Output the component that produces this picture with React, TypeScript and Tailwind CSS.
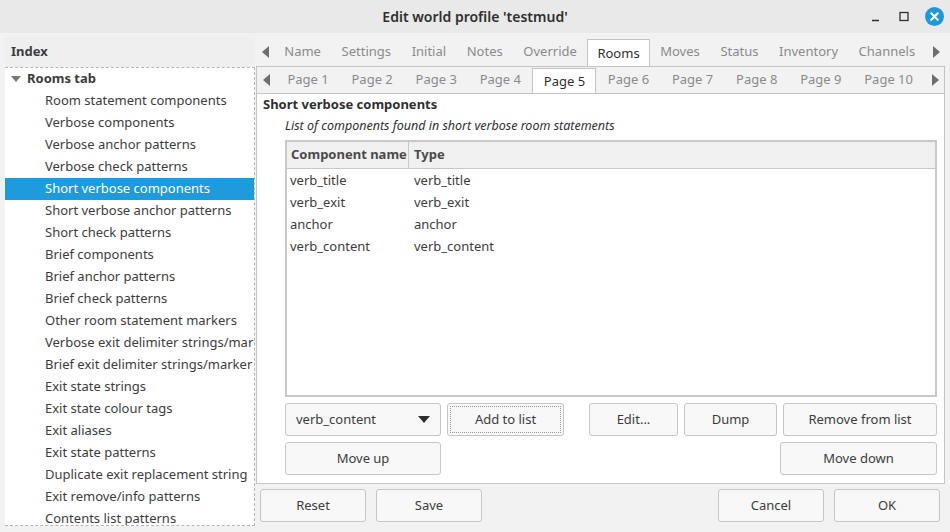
import React from 'react';

const treeItems = [
  'Room statement components',
  'Verbose components',
  'Verbose anchor patterns',
  'Verbose check patterns',
  'Short verbose components',
  'Short verbose anchor patterns',
  'Short check patterns',
  'Brief components',
  'Brief anchor patterns',
  'Brief check patterns',
  'Other room statement markers',
  'Verbose exit delimiter strings/markers',
  'Brief exit delimiter strings/marker patterns',
  'Exit state strings',
  'Exit state colour tags',
  'Exit aliases',
  'Exit state patterns',
  'Duplicate exit replacement string',
  'Exit remove/info patterns',
  'Contents list patterns',
];

const outerTabs = ['Name', 'Settings', 'Initial', 'Notes', 'Override', 'Rooms', 'Moves', 'Status', 'Inventory', 'Channels'];
const pageTabs = ['Page 1', 'Page 2', 'Page 3', 'Page 4', 'Page 5', 'Page 6', 'Page 7', 'Page 8', 'Page 9', 'Page 10'];

const rows = [
  ['verb_title', 'verb_title'],
  ['verb_exit', 'verb_exit'],
  ['anchor', 'anchor'],
  ['verb_content', 'verb_content'],
];

const ArrowLeft = () => (
  <svg width="7" height="12" viewBox="0 0 7 12" className="shrink-0">
    <path d="M7 0 L0 6 L7 12 Z" fill="#6e6e6e" />
  </svg>
);

const ArrowRight = () => (
  <svg width="7" height="12" viewBox="0 0 7 12" className="shrink-0">
    <path d="M0 0 L7 6 L0 12 Z" fill="#6e6e6e" />
  </svg>
);

const Btn: React.FC<{ label: string; className?: string; focus?: boolean }> = ({ label, className, focus }) => (
  <button
    className={
      'h-[33px] rounded-[3px] border border-[#c6c6c6] bg-[#f8f8f8] text-[13px] text-[#3c3c3c] flex items-center justify-center p-[2px] ' +
      (className || '')
    }
  >
    {focus ? (
      <span className="w-full h-full flex items-center justify-center border border-dotted border-[#9a9a9a]">{label}</span>
    ) : (
      label
    )}
  </button>
);

export default function App() {
  return (
    <div
      className="w-[950px] h-[532px] bg-[#f2f2f2] flex flex-col overflow-hidden text-[#3c3c3c]"
      style={{ fontFamily: '"Noto Sans", "Open Sans", sans-serif' }}
    >
      {/* title bar */}
      <div className="h-[33px] bg-[#e9e9e9] flex items-center relative shrink-0">
        <div className="flex-1 text-center text-[14px] font-semibold text-[#2f2f2f]">Edit world profile 'testmud'</div>
        <div className="absolute right-[6px] top-[7px] flex items-center gap-[14px]">
          <svg width="14" height="14" viewBox="0 0 14 14">
            <path d="M3 10.5 H10" stroke="#2f2f2f" strokeWidth="1.5" />
          </svg>
          <svg width="14" height="14" viewBox="0 0 14 14">
            <rect x="3" y="2.5" width="8" height="8" fill="none" stroke="#2f2f2f" strokeWidth="1.3" />
          </svg>
          <svg width="19" height="19" viewBox="0 0 19 19">
            <circle cx="9.5" cy="9.5" r="9.5" fill="#1f98d8" />
            <path d="M6.3 6.3 L12.7 12.7 M12.7 6.3 L6.3 12.7" stroke="#fff" strokeWidth="2.2" strokeLinecap="round" />
          </svg>
        </div>
      </div>

      <div className="flex flex-1 min-h-0 pt-[4px]">
        {/* left index panel */}
        <div className="w-[250px] ml-[5px] flex flex-col mb-[6px] shrink-0">
          <div className="h-[30px] bg-[#efefef] flex items-center px-[6px] text-[13px] font-bold text-[#3c3c3c]">Index</div>
          <div className="flex-1 bg-white border-t border-r border-b border-dashed border-[#b4b4b4] overflow-hidden">
            <div className="h-[22px] flex items-center pl-[6px] text-[13px] font-bold whitespace-nowrap">
              <svg width="10" height="7" viewBox="0 0 10 7" className="mr-[6px]">
                <path d="M0 0 H10 L5 6 Z" fill="#777" />
              </svg>
              Rooms tab
            </div>
            {treeItems.map((t) => {
              const sel = t === 'Short verbose components';
              return (
                <div
                  key={t}
                  className={
                    'h-[22px] flex items-center pl-[40px] text-[13px] whitespace-nowrap ' +
                    (sel ? 'bg-[#1e9bdc] text-white' : 'text-[#3c3c3c]')
                  }
                >
                  {t}
                </div>
              );
            })}
          </div>
        </div>

        {/* right side */}
        <div className="flex-1 flex flex-col ml-[1px] mr-[5px] min-w-0">
          {/* outer tabs */}
          <div className="h-[29px] flex items-end shrink-0">
            <div className="w-[18px] h-[28px] flex items-center justify-center shrink-0">
              <ArrowLeft />
            </div>
            <div className="flex-1 flex items-end min-w-0 overflow-hidden">
              {outerTabs.map((t) => {
                const sel = t === 'Rooms';
                return (
                  <div
                    key={t}
                    className={
                      'h-[28px] px-[9.3px] flex items-center text-[13px] shrink-0 ' +
                      (sel
                        ? 'bg-white border border-b-0 border-[#c4c4c4] text-[#2f2f2f] relative top-[1px]'
                        : 'text-[#8a8a8a] border border-transparent')
                    }
                  >
                    {t}
                  </div>
                );
              })}
            </div>
            <div className="w-[17px] h-[28px] flex items-center justify-center shrink-0">
              <ArrowRight />
            </div>
          </div>

          {/* outer pane */}
          <div className="h-[418px] border border-[#c4c4c4] bg-[#f2f2f2] flex flex-col shrink-0">
            {/* page tabs */}
            <div className="h-[26px] flex items-end shrink-0">
              <div className="w-[19px] h-[26px] flex items-center justify-center shrink-0">
                <ArrowLeft />
              </div>
              <div className="flex-1 flex items-end min-w-0 overflow-hidden">
                {pageTabs.map((t) => {
                  const sel = t === 'Page 5';
                  return (
                    <div
                      key={t}
                      className={
                        'h-[26px] px-[10.4px] flex items-center text-[13px] whitespace-nowrap shrink-0 ' +
                        (sel
                          ? 'bg-white border border-b-0 border-[#c4c4c4] text-[#2f2f2f] relative top-[1px]'
                          : 'text-[#8a8a8a] border border-transparent')
                      }
                    >
                      {t}
                    </div>
                  );
                })}
              </div>
              <div className="w-[17px] h-[26px] flex items-center justify-center shrink-0">
                <ArrowRight />
              </div>
            </div>

            {/* inner pane */}
            <div className="flex-1 bg-white border-t border-[#c4c4c4] flex flex-col px-[6px] pt-[1px]">
              <div className="h-[20px] flex items-center text-[13px] font-bold text-[#2f2f2f]">Short verbose components</div>
              <div className="h-[22px] flex items-center pl-[22px] text-[12.5px] italic text-[#2f2f2f]">
                List of components found in short verbose room statements
              </div>
              <div className="ml-[22px] mr-[1px] mt-[3px] h-[257px] border-2 border-[#c8c8c8] bg-white flex flex-col">
                <div className="h-[27px] bg-[#f0f0f0] border-b border-[#c8c8c8] flex text-[13px] font-bold text-[#4a4a4a]">
                  <div className="w-[122px] border-r border-[#c8c8c8] flex items-center pl-[4px]">Component name</div>
                  <div className="flex-1 flex items-center pl-[5px]">Type</div>
                </div>
                <div className="pt-[1px]">
                  {rows.map(([a, b]) => (
                    <div key={a} className="h-[22px] flex items-center text-[13px] text-[#3c3c3c]">
                      <div className="w-[123px] pl-[3px]">{a}</div>
                      <div className="flex-1 pl-[4px]">{b}</div>
                    </div>
                  ))}
                </div>
              </div>

              <div className="ml-[22px] mr-[1px] mt-[6px] flex gap-[6px]">
                <div className="w-[156px] h-[33px] rounded-[3px] border border-[#c6c6c6] bg-[#f8f8f8] flex items-center justify-between pl-[10px] pr-[10px] text-[13px]">
                  <span>verb_content</span>
                  <svg width="12" height="7" viewBox="0 0 12 7">
                    <path d="M0 0 H12 L6 7 Z" fill="#2f2f2f" />
                  </svg>
                </div>
                <Btn label="Add to list" className="w-[117px]" focus />
                <div className="w-[13px]" />
                <Btn label="Edit..." className="w-[89px]" />
                <Btn label="Dump" className="w-[93px]" />
                <Btn label="Remove from list" className="flex-1" />
              </div>
              <div className="ml-[22px] mr-[1px] mt-[6px] flex justify-between">
                <Btn label="Move up" className="w-[156px]" />
                <Btn label="Move down" className="w-[157px]" />
              </div>
            </div>
          </div>

          {/* bottom buttons */}
          <div className="flex items-center mt-[5px] pl-[4px] pr-[5px]">
            <Btn label="Reset" className="w-[106px]" />
            <Btn label="Save" className="w-[106px] ml-[10px]" />
            <div className="flex-1" />
            <Btn label="Cancel" className="w-[106px]" />
            <Btn label="OK" className="w-[106px] ml-[10px]" />
          </div>
        </div>
      </div>
    </div>
  );
}
